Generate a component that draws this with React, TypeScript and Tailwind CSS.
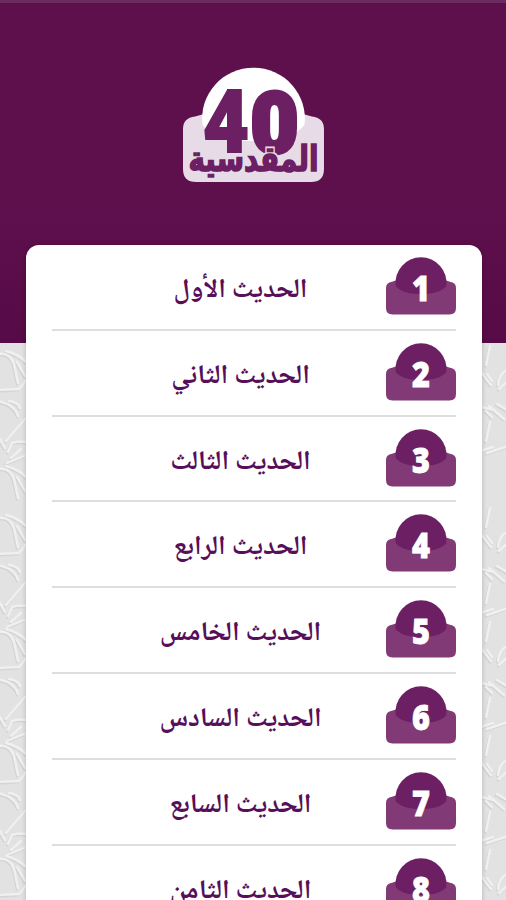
import React from 'react';

interface Hadith {
  id: number;
  title: string;
}

const hadiths: Hadith[] = [
  { id: 1, title: 'الحديث الأول' },
  { id: 2, title: 'الحديث الثاني' },
  { id: 3, title: 'الحديث الثالث' },
  { id: 4, title: 'الحديث الرابع' },
  { id: 5, title: 'الحديث الخامس' },
  { id: 6, title: 'الحديث السادس' },
  { id: 7, title: 'الحديث السابع' },
  { id: 8, title: 'الحديث الثامن' },
];

interface DomeProps {
  domeClass: string;
  baseClass: string;
}

const Dome: React.FC<DomeProps> = ({ domeClass, baseClass }) => (
  <>
    <path
      className={baseClass}
      d="M0 31 Q0 25.5 6 24.8 L10 23.6 H60 L64 24.8 Q70 25.5 70 31 V51 Q70 57.5 63.5 57.5 H6.5 Q0 57.5 0 51Z"
    />
    <path className={domeClass} d="M9.7 29 A25.5 25.5 0 1 1 60.3 29 Q54 37 35 37 Q16 37 9.7 29Z" />
  </>
);

const Logo: React.FC = () => (
  <svg className="h-[116px] w-[141px] overflow-visible" viewBox="0 0 141 116">
    <g transform="scale(2.014 2)">
      <Dome domeClass="fill-white" baseClass="fill-[#e6dbe6]" />
    </g>
    <g className="fill-[#6c1f63] stroke-[#6c1f63] stroke-2 font-[Roboto,sans-serif] text-[88px] font-black">
      <text x="20" y="85" textLength="46" lengthAdjust="spacingAndGlyphs">4</text>
      <text x="68" y="85" className="stroke-[5px] text-[84px]" textLength="47" lengthAdjust="spacingAndGlyphs">0</text>
    </g>
    {['stroke-[#e6dbe6] stroke-[4px]', 'stroke-[#6c1f63] stroke-[1.2px]'].map((stroke, i) => (
      <text
        key={stroke}
        className={`${stroke} fill-[#6c1f63] font-['DejaVu_Sans',sans-serif] text-[28px] font-bold [paint-order:stroke]`}
        transform="translate(70.5 104) scale(1 1.25)"
        textAnchor="middle"
        textLength="130"
        lengthAdjust="spacingAndGlyphs"
        aria-hidden={i === 0}
      >
        المقدسية
      </text>
    ))}
  </svg>
);

const NumberBadge: React.FC<{ value: number }> = ({ value }) => (
  <svg className="h-[58px] w-[70px] shrink-0" viewBox="0 0 70 58">
    <Dome domeClass="fill-[#6c1f63]" baseClass="fill-[#823a76]" />
    <text
      className="fill-white stroke-white stroke-[0.8px] font-['Open_Sans',sans-serif] text-[36px] font-extrabold"
      transform="translate(35 43.5) scale(0.85 1)"
      textAnchor="middle"
    >
      {value}
    </text>
  </svg>
);

const Arc = () => <path d="M-2 -34 Q10 -36 14 -24 L18 -5 M6 -37 Q18 -34 26 -26 M17 -26 L25 -12" />;

const Star = () => (
  <>
    <path d="M-2 2 L19 1 Q23 -3 25 -7" />
    <path d="M-2 13 L8 16 Q17 22 18 28 M9 13 Q18 14 20 20" />
    <path d="M25 31 L6 53 M0 51 L5 60" />
    <path d="M8 64 L12 55 Q19 53 26 54 M11 70 L21 61 M7 75 L24 68" />
  </>
);

const Weave = () => (
  <>
    <path d="M10 3 L6 22" />
    <path d="M1 29 L11 42 M7 31 L12 38 M28 27 Q19 30 18 42 M28 38 L19 46" />
    <path d="M1 64 L14 67 M9 63 L24 76 M17 61 L27 67 M6 68 L12 74" />
    <path d="M10 79 L6 98" />
    <path d="M1 108 L13 104 M7 110 L28 103" />
  </>
);

const Pattern: React.FC = () => (
  <div className="absolute inset-x-0 top-[343px] flex h-[557px] justify-between bg-[#e2e2e2]">
    {[true, false].map((left) => (
      <svg key={String(left)} className="h-full w-[26px] fill-none [stroke-linecap:round]" viewBox="0 0 26 557">
        {['stroke-[#d4d4d4]', 'stroke-[#f0f0f0]'].map((stroke, i) => (
          <g key={stroke} className={stroke} strokeWidth="2.4" transform={i === 0 ? 'translate(-1 1.4)' : undefined}>
            {left
              ? [45, 160, 209, 323, 437, 550].map((y) => (
                  <g key={y} transform={`translate(0 ${y})`}>
                    <Arc />
                    {y !== 160 && <Star />}
                  </g>
                ))
              : [0, 162, 276, 390, 504].map((y) => (
                  <g key={y} transform={`translate(0 ${y})`}>
                    <Weave />
                  </g>
                ))}
          </g>
        ))}
      </svg>
    ))}
  </div>
);

const HadithRow: React.FC<{ hadith: Hadith }> = ({ hadith }) => (
  <li className="flex h-[85.8px] items-start border-b-2 border-[#dedede] pt-3">
    <NumberBadge value={hadith.id} />
    <p className="flex-1 pl-[43px] pt-[14px] text-center text-[27px] leading-10 font-bold whitespace-nowrap">
      {hadith.title}
    </p>
  </li>
);

const App: React.FC = () => (
  <div className="relative h-[900px] w-full overflow-hidden bg-[#e2e2e2]">
    <Pattern />
    <header className="relative flex h-[343px] justify-center border-t-[3px] border-[#6b2c60] bg-linear-to-b from-[#5e104d] from-60% to-[#560a46] pt-16">
      <Logo />
    </header>
    <main
      dir="rtl"
      className="relative mr-[24px] ml-[26px] -mt-[98px] rounded-t-[13px] bg-white px-[26px] font-['Noto_Naskh_Arabic','DejaVu_Sans',serif] text-[#560f58] shadow-[0_0_5px_rgba(0,0,0,0.2)]"
    >
      <ul>
        {hadiths.map((hadith) => (
          <HadithRow key={hadith.id} hadith={hadith} />
        ))}
      </ul>
    </main>
  </div>
);

export default App;
